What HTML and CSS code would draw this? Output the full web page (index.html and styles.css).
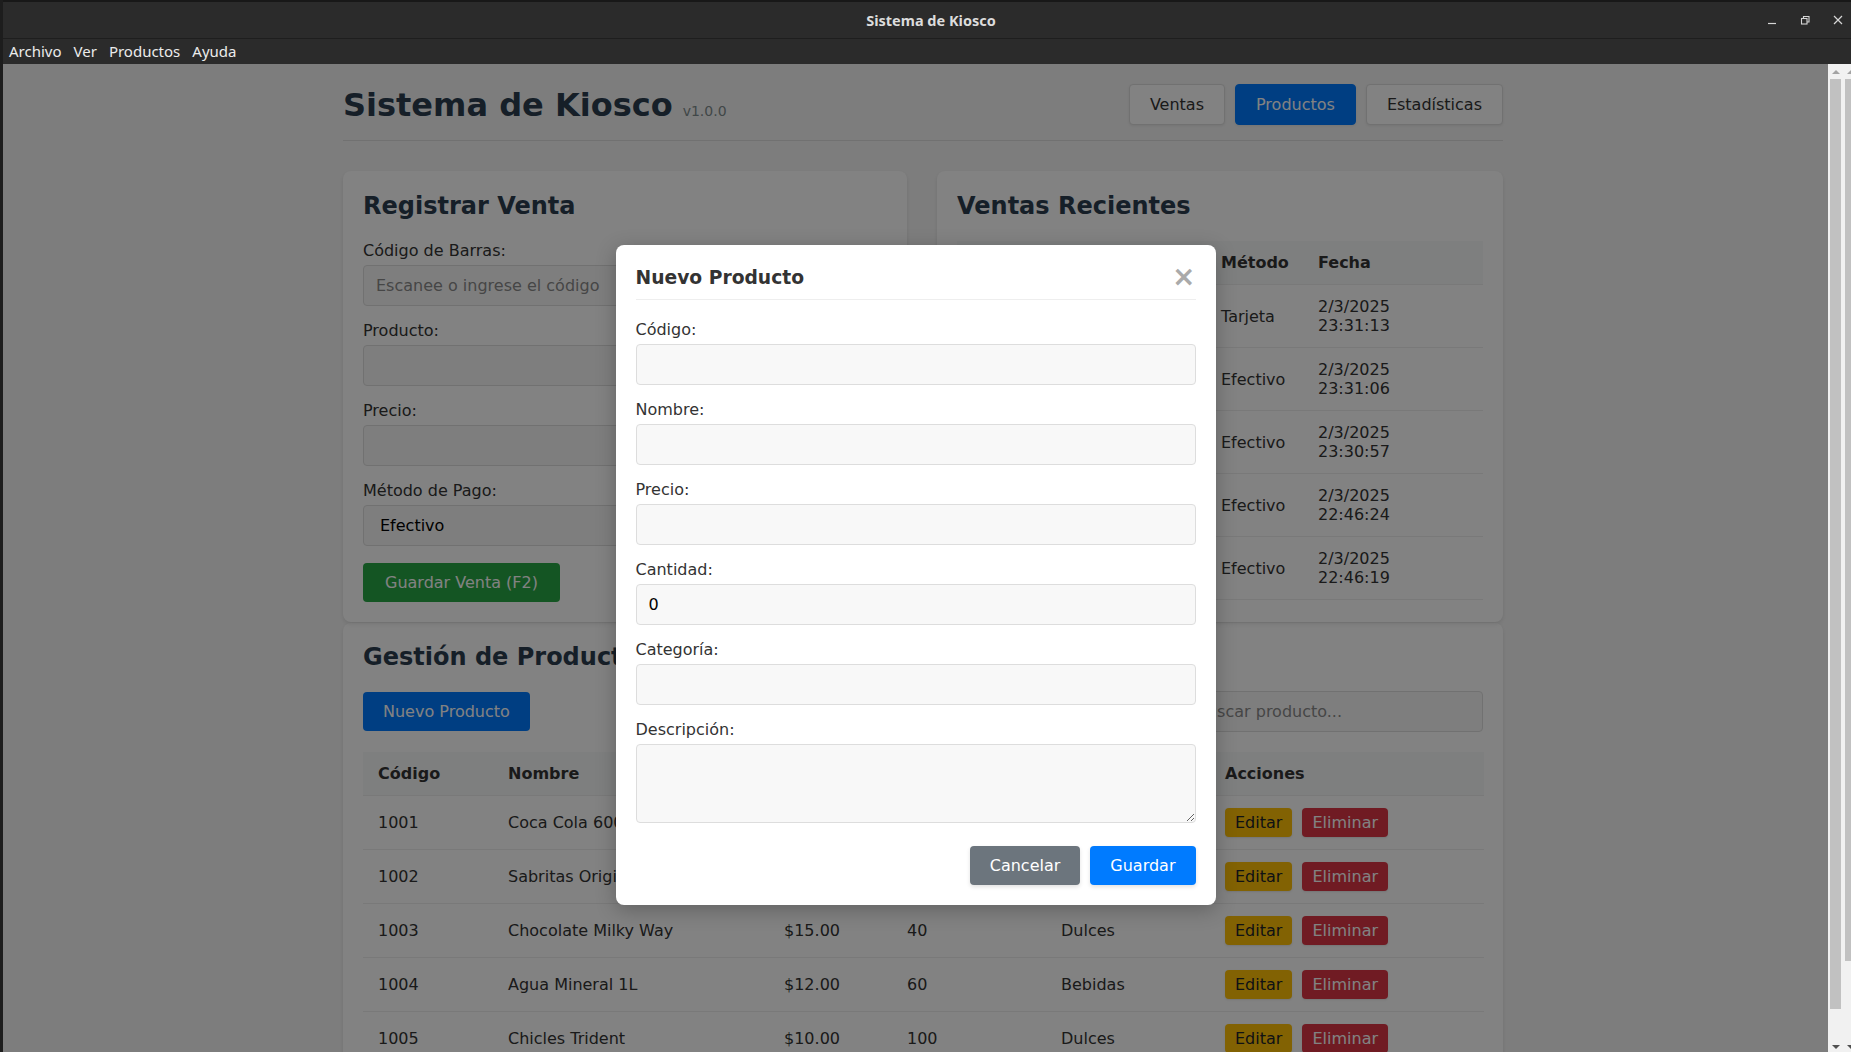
FILE: index.html
```html
<!DOCTYPE html>
<html lang="es">
<head>
<meta charset="utf-8">
<title>Sistema de Kiosco</title>
<link rel="stylesheet" href="styles.css">
</head>
<body>
<div class="window">
  <div class="titlebar">
    <span></span>
    <span class="title">Sistema de Kiosco</span>
    <div class="controls">
      <svg class="ctl" width="12" height="12" viewBox="0 0 12 12"><path d="M2 9.5 H10" stroke="#d6d6d6" stroke-width="1.2" fill="none"/></svg>
      <svg class="ctl" width="12" height="12" viewBox="0 0 12 12"><rect x="2.5" y="4.5" width="5.5" height="5.5" stroke="#d6d6d6" stroke-width="1.1" fill="none"/><path d="M4.5 4.5 V2.5 H10 V8 H8" stroke="#d6d6d6" stroke-width="1.1" fill="none"/></svg>
      <svg class="ctl" width="12" height="12" viewBox="0 0 12 12"><path d="M2 2 L10 10 M10 2 L2 10" stroke="#d6d6d6" stroke-width="1.2" fill="none"/></svg>
    </div>
  </div>
  <div class="menubar">
    <span>Archivo</span><span>Ver</span><span>Productos</span><span>Ayuda</span>
  </div>
  <div class="viewport">
    <div class="page">
      <div class="container">
        <header class="app-header">
          <h1>Sistema de Kiosco<span class="version">v1.0.0</span></h1>
          <nav class="nav">
            <button class="nav-btn">Ventas</button>
            <button class="nav-btn active">Productos</button>
            <button class="nav-btn">Estadísticas</button>
          </nav>
        </header>

        <div class="top-grid">
          <section class="card">
            <h2>Registrar Venta</h2>
            <div class="form-group">
              <label>Código de Barras:</label>
              <input class="input" type="text" placeholder="Escanee o ingrese el código">
            </div>
            <div class="form-group">
              <label>Producto:</label>
              <input class="input" type="text">
            </div>
            <div class="form-group">
              <label>Precio:</label>
              <input class="input" type="text">
            </div>
            <div class="form-group">
              <label>Método de Pago:</label>
              <select class="input select"><option>Efectivo</option><option>Tarjeta</option></select>
            </div>
            <button class="btn btn-success">Guardar Venta (F2)</button>
          </section>

          <section class="card">
            <h2>Ventas Recientes</h2>
            <table class="table">
              <colgroup><col class="v-c1"><col class="v-c2"><col class="v-c3"><col class="v-c4"></colgroup>
              <thead><tr><th>Producto</th><th>Total</th><th>Método</th><th>Fecha</th></tr></thead>
              <tbody>
                <tr><td>Coca Cola 600ml</td><td>$18.00</td><td>Tarjeta</td><td>2/3/2025<br>23:31:13</td></tr>
                <tr><td>Chicles Trident</td><td>$10.00</td><td>Efectivo</td><td>2/3/2025<br>23:31:06</td></tr>
                <tr><td>Agua Mineral 1L</td><td>$12.00</td><td>Efectivo</td><td>2/3/2025<br>23:30:57</td></tr>
                <tr><td>Chocolate Milky Way</td><td>$15.00</td><td>Efectivo</td><td>2/3/2025<br>22:46:24</td></tr>
                <tr><td>Sabritas Original</td><td>$17.00</td><td>Efectivo</td><td>2/3/2025<br>22:46:19</td></tr>
              </tbody>
            </table>
          </section>
        </div>

        <section class="card">
          <h2>Gestión de Productos</h2>
          <div class="toolbar">
            <button class="btn btn-primary">Nuevo Producto</button>
            <input class="input search" type="text" placeholder="Buscar producto...">
          </div>
          <table class="table">
            <colgroup><col class="p-c1"><col class="p-c2"><col class="p-c3"><col class="p-c4"><col class="p-c5"><col class="p-c6"></colgroup>
            <thead><tr><th>Código</th><th>Nombre</th><th>Precio</th><th>Cantidad</th><th>Categoría</th><th>Acciones</th></tr></thead>
            <tbody>
              <tr><td>1001</td><td>Coca Cola 600ml</td><td>$18.00</td><td>50</td><td>Bebidas</td><td><button class="btn-sm btn-warning">Editar</button> <button class="btn-sm btn-danger">Eliminar</button></td></tr>
              <tr><td>1002</td><td>Sabritas Original</td><td>$17.00</td><td>30</td><td>Botanas</td><td><button class="btn-sm btn-warning">Editar</button> <button class="btn-sm btn-danger">Eliminar</button></td></tr>
              <tr><td>1003</td><td>Chocolate Milky Way</td><td>$15.00</td><td>40</td><td>Dulces</td><td><button class="btn-sm btn-warning">Editar</button> <button class="btn-sm btn-danger">Eliminar</button></td></tr>
              <tr><td>1004</td><td>Agua Mineral 1L</td><td>$12.00</td><td>60</td><td>Bebidas</td><td><button class="btn-sm btn-warning">Editar</button> <button class="btn-sm btn-danger">Eliminar</button></td></tr>
              <tr><td>1005</td><td>Chicles Trident</td><td>$10.00</td><td>100</td><td>Dulces</td><td><button class="btn-sm btn-warning">Editar</button> <button class="btn-sm btn-danger">Eliminar</button></td></tr>
            </tbody>
          </table>
        </section>
      </div>

      <div class="overlay">
        <div class="modal">
          <div class="modal-header">
            <h3>Nuevo Producto</h3>
            <span class="close">×</span>
          </div>
          <div class="form-group">
            <label>Código:</label>
            <input class="input" type="text">
          </div>
          <div class="form-group">
            <label>Nombre:</label>
            <input class="input" type="text">
          </div>
          <div class="form-group">
            <label>Precio:</label>
            <input class="input" type="text">
          </div>
          <div class="form-group">
            <label>Cantidad:</label>
            <input class="input" type="text" value="0">
          </div>
          <div class="form-group">
            <label>Categoría:</label>
            <input class="input" type="text">
          </div>
          <div class="form-group">
            <label>Descripción:</label>
            <textarea class="input textarea"></textarea>
          </div>
          <div class="modal-footer">
            <button class="btn btn-secondary shadow">Cancelar</button>
            <button class="btn btn-primary shadow">Guardar</button>
          </div>
        </div>
      </div>
    </div>

    <div class="scrollbars">
      <div class="sb">
        <div class="arrow-box"><span class="arrow-up"></span></div>
        <div class="thumb thumb-1"></div>
        <div class="sb-fill"></div>
        <div class="arrow-box"><span class="arrow-down"></span></div>
      </div>
      <div class="sb">
        <div class="arrow-box"><span class="arrow-up"></span></div>
        <div class="thumb thumb-2"></div>
        <div class="sb-fill"></div>
        <div class="arrow-box"><span class="arrow-down"></span></div>
      </div>
    </div>
  </div>
</div>
</body>
</html>
```

FILE: styles.css
```css
* { box-sizing: border-box; }

body {
  margin: 0;
  width: 1851px;
  height: 1052px;
  overflow: hidden;
  background: #1c1c1c;
  font-family: "DejaVu Sans", Verdana, sans-serif;
}

.window {
  height: 1052px;
  border-left: 3px solid #1d1d1d;
  display: flex;
  flex-direction: column;
}

/* ---- title bar ---- */
.titlebar {
  height: 39px;
  flex-shrink: 0;
  background: #2b2b2b;
  border-top: 2px solid #181818;
  border-bottom: 1px solid #1e1e1e;
  display: grid;
  grid-template-columns: 1fr auto 1fr;
  align-items: center;
}
.title {
  font-family: "Noto Sans", sans-serif;
  font-weight: bold;
  font-size: 14.5px;
  color: #dcdcdc;
  padding-left: 8px;
}
.controls {
  justify-self: end;
  display: flex;
  align-items: center;
  gap: 21px;
  padding-right: 7px;
}
.ctl { display: block; }

/* ---- menu bar ---- */
.menubar {
  height: 25px;
  flex-shrink: 0;
  background: #2b2b2b;
  display: flex;
  align-items: center;
  gap: 12px;
  padding-left: 6px;
  padding-bottom: 1px;
  font-family: "Noto Sans", sans-serif;
  font-size: 15px;
  color: #ececec;
}

/* ---- viewport ---- */
.viewport {
  flex: 1;
  display: flex;
  min-height: 0;
}
.page {
  flex: 1;
  position: relative;
  overflow: hidden;
  background: #f6f6f6;
}
.container {
  width: 1160px;
  margin-left: 340px;
  padding-top: 20px;
}

.app-header {
  display: flex;
  justify-content: space-between;
  align-items: center;
  padding-bottom: 15px;
  border-bottom: 1px solid #dddddd;
  margin-bottom: 30px;
}
h1 {
  margin: 0;
  font-size: 32px;
  color: #2c3e50;
}
.version {
  font-size: 14px;
  font-weight: normal;
  color: #7f8c8d;
  margin-left: 10px;
}
.nav {
  display: flex;
  gap: 10px;
}
.nav-btn {
  font-family: "DejaVu Sans", sans-serif;
  font-size: 16px;
  padding: 10px 20px;
  background: #ffffff;
  color: #333333;
  border: 1px solid #dddddd;
  border-radius: 4px;
  box-shadow: 0 1px 3px rgba(0,0,0,0.08);
}
.nav-btn.active {
  background: #007bff;
  border-color: #007bff;
  color: #ffffff;
}

.top-grid {
  display: grid;
  grid-template-columns: 1fr 1fr;
  gap: 30px;
  margin-bottom: 1px;
}
.card {
  background: #ffffff;
  border-radius: 8px;
  padding: 20px;
  box-shadow: 0 2px 4px rgba(0,0,0,0.1);
}
h2 {
  margin: 0 0 20px;
  font-size: 24px;
  color: #2c3e50;
}
.top-grid h2 {
  line-height: 30px;
}

.form-group { margin-bottom: 15px; }
label {
  display: block;
  margin-bottom: 5px;
  font-size: 16px;
  color: #333333;
}
.input {
  display: block;
  width: 100%;
  padding: 10px 12px;
  border: 1px solid #dddddd;
  border-radius: 4px;
  font-family: "DejaVu Sans", sans-serif;
  font-size: 16px;
  color: #000000;
  background: #f8f8f8;
}
.input::placeholder { color: #8a8a8a; }
.select { height: 41px; padding: 0 12px; }
.textarea { height: 79px; resize: vertical; }

.btn {
  font-family: "DejaVu Sans", sans-serif;
  font-size: 16px;
  padding: 10px 20px;
  border: none;
  border-radius: 4px;
  color: #ffffff;
}
.btn-success { background: #28a745; margin-top: 2px; padding: 10px 22px; }
.btn-primary { background: #007bff; }
.btn-secondary { background: #6c757d; }
.shadow { box-shadow: 0 2px 4px rgba(0,0,0,0.12); }

/* ---- tables ---- */
.table {
  width: 100%;
  border-collapse: collapse;
  table-layout: fixed;
  background: #ffffff;
}
.table th, .table td {
  padding: 12px 15px;
  text-align: left;
  border-bottom: 1px solid #eeeeee;
  font-size: 16px;
  color: #333333;
  vertical-align: middle;
  white-space: nowrap;
  overflow: hidden;
}
.table th {
  background: #f8f9fa;
  font-weight: bold;
}
.v-c1 { width: 110px; }
.v-c2 { width: 139px; }
.v-c3 { width: 97px; }
.v-c4 { width: 180px; }

.p-c1 { width: 130px; }
.p-c2 { width: 276px; }
.p-c3 { width: 123px; }
.p-c4 { width: 154px; }
.p-c5 { width: 164px; }
.p-c6 { width: 274px; }

.toolbar {
  display: flex;
  justify-content: space-between;
  align-items: center;
  margin-bottom: 20px;
}
.search { width: 300px; }

.btn-sm {
  font-family: "DejaVu Sans", sans-serif;
  font-size: 16px;
  padding: 5px 10px;
  border: none;
  border-radius: 4px;
  margin-right: 5px;
  box-shadow: 0 1px 2px rgba(0,0,0,0.1);
}
.btn-warning { background: #ffc107; color: #212529; }
.btn-danger { background: #dc3545; color: #ffffff; }

/* ---- modal ---- */
.overlay {
  position: absolute;
  inset: 0;
  background: rgba(0,0,0,0.49);
  display: flex;
  justify-content: center;
  align-items: flex-start;
  padding-top: 181px;
}
.modal {
  width: 600px;
  background: #ffffff;
  border-radius: 8px;
  padding: 20px;
  box-shadow: 0 5px 20px rgba(0,0,0,0.25);
}
.modal-header {
  display: flex;
  justify-content: space-between;
  align-items: center;
  padding-bottom: 10px;
  border-bottom: 1px solid #eeeeee;
  margin-bottom: 20px;
}
.modal-header h3 {
  margin: 0;
  font-size: 18.72px;
  color: #333333;
}
.close {
  font-size: 28px;
  font-weight: bold;
  line-height: 24px;
  height: 24px;
  color: #aaaaaa;
}
.modal-footer {
  display: flex;
  justify-content: flex-end;
  gap: 10px;
  margin-top: 23px;
}

/* ---- scrollbars ---- */
.scrollbars {
  width: 23px;
  flex-shrink: 0;
  background: #f1f1f1;
  display: flex;
  overflow: hidden;
}
.sb {
  width: 15px;
  flex-shrink: 0;
  display: flex;
  flex-direction: column;
}
.arrow-box {
  height: 15px;
  flex-shrink: 0;
  display: flex;
  align-items: center;
  justify-content: center;
}
.arrow-up {
  width: 0;
  height: 0;
  border-left: 4px solid transparent;
  border-right: 4px solid transparent;
  border-bottom: 4px solid #a3a3a3;
}
.arrow-down {
  width: 0;
  height: 0;
  border-left: 4px solid transparent;
  border-right: 4px solid transparent;
  border-top: 4px solid #505050;
  margin-top: 5px;
}
.thumb {
  margin: 0 2px;
  background: #c1c1c1;
  flex-shrink: 0;
}
.thumb-1 { height: 930px; }
.thumb-2 { height: 882px; }
.sb-fill { flex: 1; }
```
